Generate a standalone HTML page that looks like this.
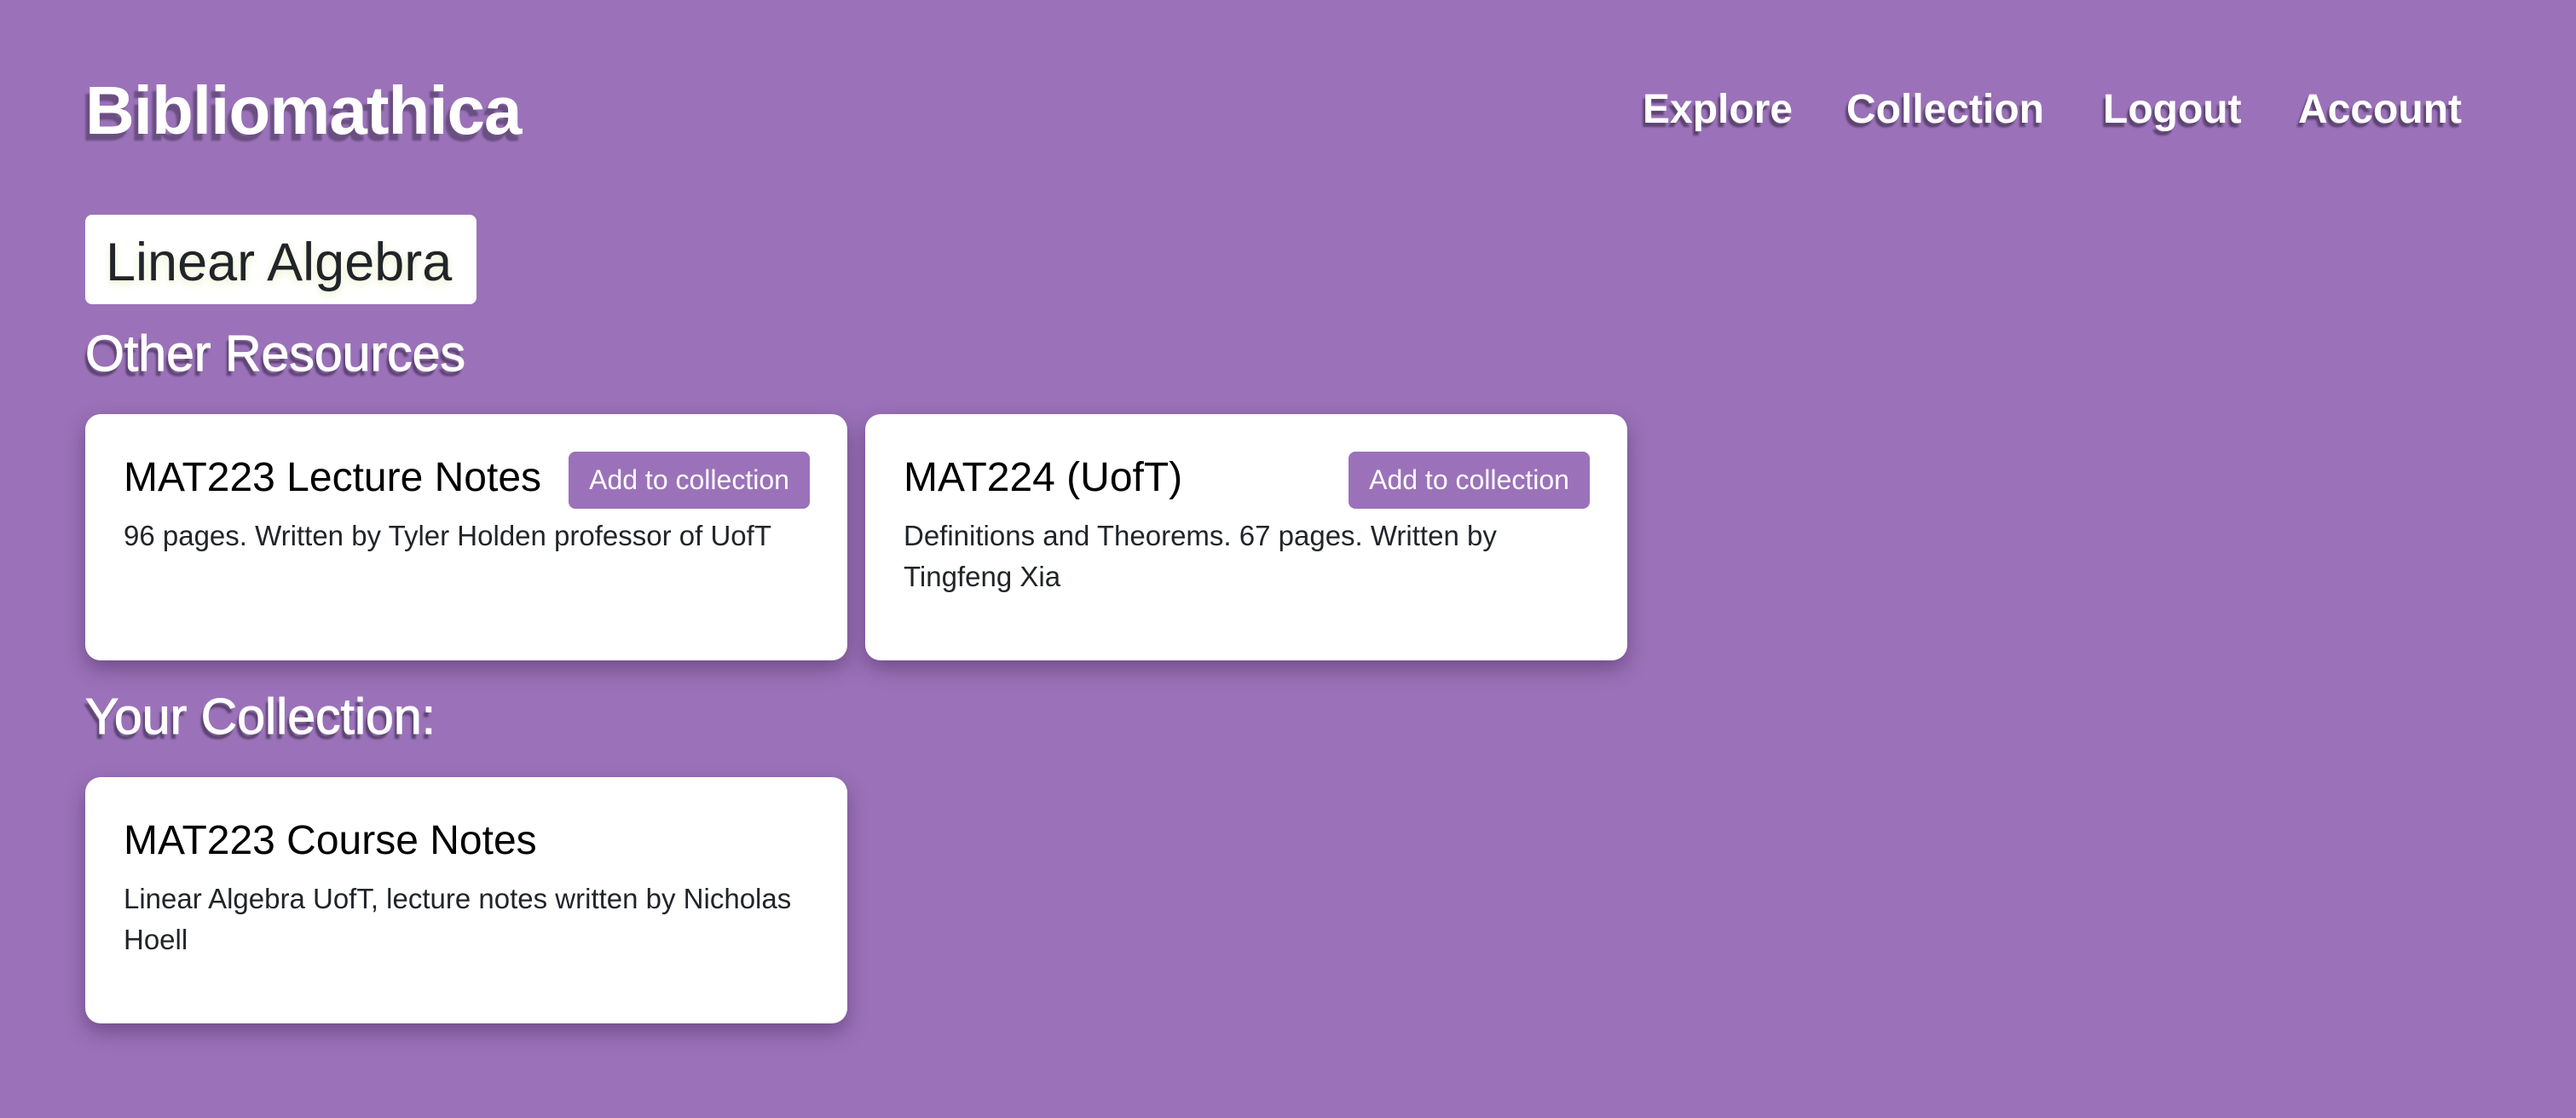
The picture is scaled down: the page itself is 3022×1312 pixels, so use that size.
<!DOCTYPE html>
<html><head><meta charset="utf-8"><style>
html,body{margin:0;padding:0}
body{width:3022px;height:1312px;background:#9b72b9;font-family:"Liberation Sans",Arial,sans-serif;position:relative;overflow:hidden}
.abs{position:absolute;white-space:nowrap}
.logo{left:100px;top:84px;font-size:80px;font-weight:bold;color:#fff;text-shadow:-5px 8px 2px #6a4f82;letter-spacing:-1px}
.nav{top:101px;font-size:48px;font-weight:bold;color:#fff;text-shadow:-3px 5px 2px #5c4470}
.la{left:100px;top:252px;width:459px;height:105px;background:#fff;border-radius:8px}
.la span{position:absolute;left:24px;top:20px;font-size:63px;color:#212529;text-shadow:0 4px 10px #e8f0c8}
.h2{left:100px;font-size:59px;color:#fff;text-shadow:-3px 6px 2px #5c4470;-webkit-text-stroke:1px #fff}
.card{position:absolute;background:#fff;border-radius:18px;box-shadow:0 10px 24px rgba(60,30,80,.45);width:894px;height:289px}
.ct{position:absolute;left:45px;top:47px;font-size:48px;color:#000}
.btn{position:absolute;left:567px;top:44px;width:283px;height:67px;background:#9b72b9;border-radius:8px;color:#fff;font-size:32px;line-height:67px;text-align:center}
.cd{position:absolute;left:45px;top:119px;width:805px;font-size:33px;line-height:48px;color:#212529}
</style></head><body>
<div class="abs logo">Bibliomathica</div>
<div class="abs nav" style="left:1927px">Explore</div>
<div class="abs nav" style="left:2166px">Collection</div>
<div class="abs nav" style="left:2467px">Logout</div>
<div class="abs nav" style="left:2696px">Account</div>
<div class="abs la"><span>Linear Algebra</span></div>
<div class="abs h2" style="top:381px">Other Resources</div>
<div class="card" style="left:100px;top:486px"><div class="ct">MAT223 Lecture Notes</div><div class="btn">Add to collection</div><div class="cd">96 pages. Written by Tyler Holden professor of UofT</div></div>
<div class="card" style="left:1015px;top:486px"><div class="ct">MAT224 (UofT)</div><div class="btn">Add to collection</div><div class="cd">Definitions and Theorems. 67 pages. Written by Tingfeng Xia</div></div>
<div class="abs h2" style="top:807px">Your Collection:</div>
<div class="card" style="left:100px;top:912px"><div class="ct">MAT223 Course Notes</div><div class="cd">Linear Algebra UofT, lecture notes written by Nicholas Hoell</div></div>
</body></html>
